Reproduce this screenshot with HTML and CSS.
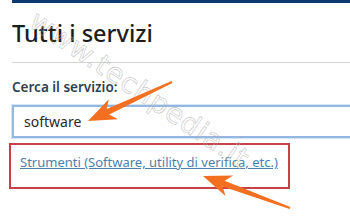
FILE: index.html
```html
<!DOCTYPE html>
<html lang="it">
<head>
<meta charset="utf-8">
<title>Tutti i servizi</title>
<link rel="stylesheet" href="styles.css">
</head>
<body>
<div class="page">
  <div class="topbar"></div>
  <h1 class="title">Tutti i servizi</h1>
  <div class="rule"></div>
  <div class="label">Cerca il servizio:</div>
  <div class="input">software</div>
  <div class="result"><a class="link" href="#">Strumenti (Software, utility di verifica, etc.)</a></div>
  <div class="watermark">www.techpedia.it</div>
  <svg class="arrows" width="350" height="220" viewBox="0 0 350 220">
    <polygon fill="#f37021" points="88,121 118,119.2 109.2,114.5 172.4,82.9 171.6,81.1 106.7,109 108.8,99.2"/>
    <polygon fill="#f37021" points="203,176 233.1,175.4 224.6,180.8 290.3,207.1 289.7,208.9 222.6,186.4 225.5,196"/>
  </svg>
</div>
</body>
</html>
```
FILE: styles.css
```css
html, body {
  margin: 0;
  padding: 0;
  background: #fff;
}
.page {
  position: relative;
  width: 350px;
  height: 220px;
  overflow: hidden;
  padding-left: 12px;
  box-sizing: border-box;
  font-family: "Noto Sans", "Open Sans", sans-serif;
}
.topbar {
  height: 3px;
  margin-right: -20px;
  background: #0d3a6c;
}
.title {
  margin: 15px 0 0 0;
  font-size: 23.5px;
  line-height: 30px;
  font-weight: 500;
  color: #1c1c1c;
}
.rule {
  margin-top: 14px;
  height: 1px;
  background: #d4d4d4;
  margin-right: -20px;
}
.label {
  margin-top: 15px;
  font-size: 13.5px;
  line-height: 18px;
  font-weight: 600;
  color: #2e3f52;
}
.input {
  margin-top: 9px;
  width: 360px;
  height: 29px;
  box-sizing: content-box;
  border: 2px solid #93b7e0;
  box-shadow: 0 0 0 1px #d6e5f5;
  padding-left: 10px;
  font-size: 14px;
  line-height: 29px;
  color: #2a2a2a;
}
.result {
  margin: 5px 0 0 -3px;
  width: 268px;
  height: 42px;
  border: 2px solid #c8404a;
  padding: 0 0 0 9px;
  box-sizing: content-box;
}
.link {
  display: block;
  margin-top: 8px;
  font-size: 13px;
  line-height: 18px;
  color: #4d7fae;
  text-decoration: underline;
  white-space: nowrap;
}
.watermark {
  position: absolute;
  left: 42px;
  top: 4px;
  font-family: "DejaVu Sans", sans-serif;
  font-size: 28px;
  letter-spacing: 1px;
  color: transparent;
  -webkit-text-stroke: 0.6px #b4b4b4;
  transform: rotate(34deg);
  transform-origin: 0 0;
  white-space: nowrap;
  opacity: 0.75;
}
.arrows {
  position: absolute;
  left: 0;
  top: 0;
}
```
